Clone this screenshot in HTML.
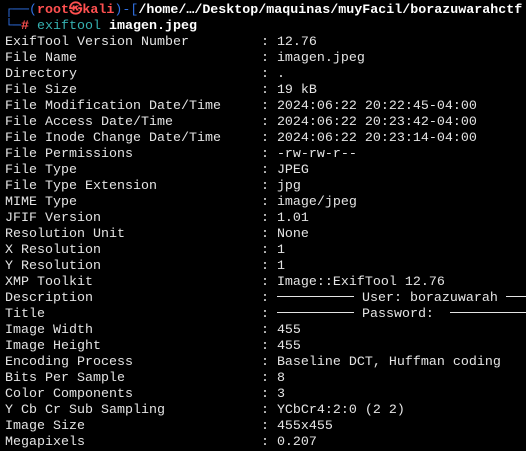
<!DOCTYPE html>
<html><head><meta charset="utf-8"><style>
html,body{margin:0;padding:0;background:#000;width:526px;height:449px;overflow:hidden}
.t{position:absolute;left:5px;top:3px;font-family:"Liberation Mono","DejaVu Sans Mono",monospace;font-size:13.33px;line-height:16px;color:#e4e4e4;white-space:pre}
.b{color:#2f6fe0}.r{color:#ff5050;font-weight:bold}.w{color:#fff;font-weight:bold}.c{color:#35b0b0}
.ln{display:inline-block;border-top:1px solid #e4e4e4;vertical-align:middle;height:0;margin-top:-2px}
</style></head><body><div class="t"><span class="b">┌──(</span><span class="r">root㉿kali</span><span class="b">)-[</span><span class="w">/home/…/Desktop/maquinas/muyFacil/borazuwarahctf</span>
<span class="b">└─</span><span class="r">#</span> <span class="c">exiftool</span> <span class="w">imagen.jpeg</span>
ExifTool Version Number         : 12.76
File Name                       : imagen.jpeg
Directory                       : .
File Size                       : 19 kB
File Modification Date/Time     : 2024:06:22 20:22:45-04:00
File Access Date/Time           : 2024:06:22 20:23:42-04:00
File Inode Change Date/Time     : 2024:06:22 20:23:14-04:00
File Permissions                : -rw-rw-r--
File Type                       : JPEG
File Type Extension             : jpg
MIME Type                       : image/jpeg
JFIF Version                    : 1.01
Resolution Unit                 : None
X Resolution                    : 1
Y Resolution                    : 1
XMP Toolkit                     : Image::ExifTool 12.76
Description                     : <span class="ln" style="width:77px"></span> User: borazuwarah <span class="ln" style="width:30px"></span>
Title                           : <span class="ln" style="width:77px"></span> Password:  <span class="ln" style="width:80px"></span>
Image Width                     : 455
Image Height                    : 455
Encoding Process                : Baseline DCT, Huffman coding
Bits Per Sample                 : 8
Color Components                : 3
Y Cb Cr Sub Sampling            : YCbCr4:2:0 (2 2)
Image Size                      : 455x455
Megapixels                      : 0.207</div></body></html>
